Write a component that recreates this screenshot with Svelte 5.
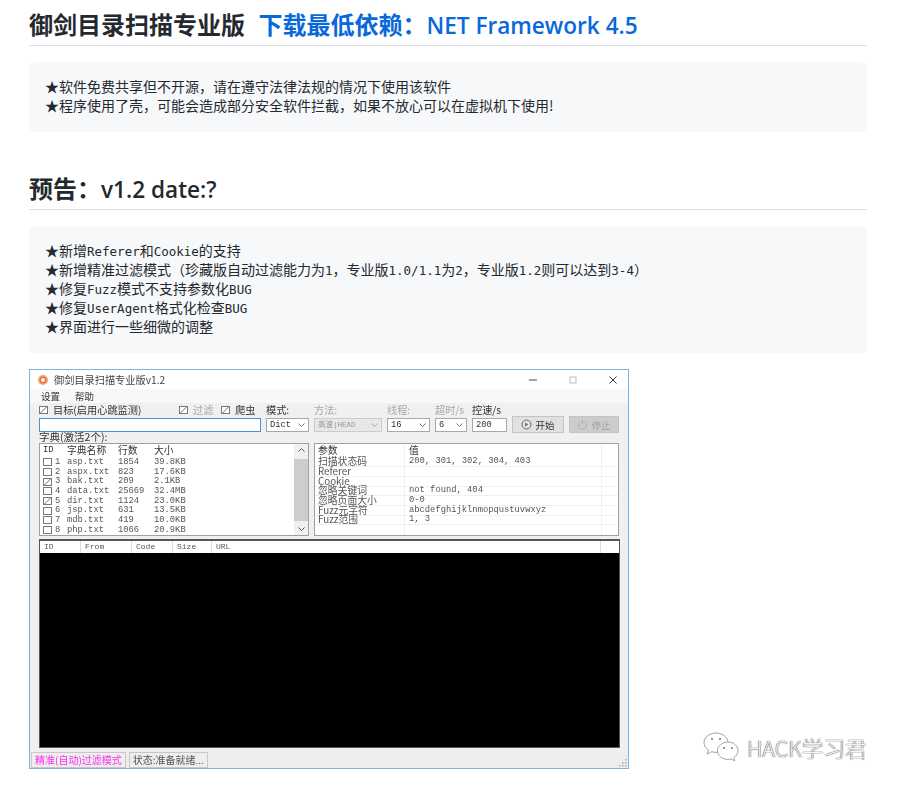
<script>
  const dicts = [
    { id: 1, name: 'asp.txt', lines: '1854', size: '39.8KB', on: false },
    { id: 2, name: 'aspx.txt', lines: '823', size: '17.6KB', on: false },
    { id: 3, name: 'bak.txt', lines: '209', size: '2.1KB', on: true },
    { id: 4, name: 'data.txt', lines: '25669', size: '32.4MB', on: false },
    { id: 5, name: 'dir.txt', lines: '1124', size: '23.0KB', on: true },
    { id: 6, name: 'jsp.txt', lines: '631', size: '13.5KB', on: false },
    { id: 7, name: 'mdb.txt', lines: '419', size: '10.0KB', on: false },
    { id: 8, name: 'php.txt', lines: '1066', size: '20.9KB', on: false }
  ];
  const params = [
    ['扫描状态码', '200, 301, 302, 304, 403'],
    ['Referer', ''],
    ['Cookie', ''],
    ['忽略关键词', 'not found, 404'],
    ['忽略页面大小', '0-0'],
    ['Fuzz元字符', 'abcdefghijklnmopqustuvwxyz'],
    ['Fuzz范围', '1, 3']
  ];
</script>

<main>
  <h2>御剑目录扫描专业版 <span class="link">下载最低依赖：<span class="en">NET Framework 4.5</span></span></h2>
  <pre class="first">★软件免费共享但不开源，请在遵守法律法规的情况下使用该软件
★程序使用了壳，可能会造成部分安全软件拦截，如果不放心可以在虚拟机下使用!</pre>

  <h2 class="next">预告：<span class="en">v1.2 date:?</span></h2>
  <pre>★新增<span class="m">Referer</span>和<span class="m">Cookie</span>的支持
★新增精准过滤模式（珍藏版自动过滤能力为<span class="m">1</span>，专业版<span class="m">1.0/1.1</span>为<span class="m">2</span>，专业版<span class="m">1.2</span>则可以达到<span class="m">3-4</span>）
★修复<span class="m">Fuzz</span>模式不支持参数化<span class="m">BUG</span>
★修复<span class="m">UserAgent</span>格式化检查<span class="m">BUG</span>
★界面进行一些细微的调整</pre>

  <div class="shot">
    <div class="window">
      <div class="titlebar">
        <svg class="appicon" width="12" height="12" viewBox="0 0 12 12">
          <circle cx="6" cy="6" r="5" fill="#f4b04a" />
          <circle cx="6" cy="6" r="3.4" fill="#e9695f" />
          <circle cx="6" cy="6" r="2" fill="#fff" />
        </svg>
        <span class="title">御剑目录扫描专业版v1.2</span>
        <div class="winbtns">
          <svg width="10" height="10" viewBox="0 0 10 10"><path d="M1 5h8" stroke="#444" /></svg>
          <svg width="10" height="10" viewBox="0 0 10 10"><rect x="2" y="2" width="6" height="6" fill="none" stroke="#bbb" /></svg>
          <svg width="10" height="10" viewBox="0 0 10 10"><path d="M1.500 1.500l7 7M8.500 1.500l-7 7" stroke="#333" /></svg>
        </div>
      </div>
      <div class="menubar"><span>设置</span><span>帮助</span></div>
      <div class="body">
        <div class="controls">
          <div class="checks">
            <label class="target"><i class="box on"></i>目标(启用心跳监测)</label>
            <label class="off filter"><i class="box on"></i>过滤</label>
            <label class="spider"><i class="box on"></i>爬虫</label>
          </div>
          <span>模式:</span>
          <span class="faded">方法:</span>
          <span class="faded">线程:</span>
          <span class="faded">超时/s</span>
          <span>控速/s</span>
          <span></span>
          <span></span>

          <div class="field focus"></div>
          <div class="field select"><b>Dict</b><svg class="chev" width="7" height="4" viewBox="0 0 7 4"><path d="M.5.5l3 3 3-3" fill="none" stroke="#777" /></svg></div>
          <div class="field select disabled"><b>高速|HEAD</b><svg class="chev" width="7" height="4" viewBox="0 0 7 4"><path d="M.5.5l3 3 3-3" fill="none" stroke="#aaa" /></svg></div>
          <div class="field select"><b>16</b><svg class="chev" width="7" height="4" viewBox="0 0 7 4"><path d="M.5.5l3 3 3-3" fill="none" stroke="#777" /></svg></div>
          <div class="field select"><b>6</b><svg class="chev" width="7" height="4" viewBox="0 0 7 4"><path d="M.5.5l3 3 3-3" fill="none" stroke="#777" /></svg></div>
          <div class="field"><b>200</b></div>
          <div class="btn">
            <svg width="11" height="11" viewBox="0 0 11 11"><circle cx="5.500" cy="5.500" r="4.500" fill="none" stroke="#666" /><path d="M4.200 3.500l3 2-3 2z" fill="#666" /></svg>
            开始
          </div>
          <div class="btn stop">
            <svg width="11" height="11" viewBox="0 0 11 11"><path d="M3.500 2.500a4 4 0 1 0 4 0M5.500 1v4" fill="none" stroke="#aaa" /></svg>
            停止
          </div>
        </div>

        <div class="dictlabel">字典(激活2个):</div>

        <div class="panes">
          <div class="pane left">
            <div class="listwrap">
              <div class="dictrow head">
                <span class="c-id">ID</span><span class="c-name zh">字典名称</span><span class="c-lines zh">行数</span><span class="zh">大小</span>
              </div>
              {#each dicts as d (d.id)}
                <div class="dictrow">
                  <span class="c-id"><i class="box" class:on={d.on}></i>{d.id}</span><span class="c-name">{d.name}</span><span class="c-lines">{d.lines}</span><span>{d.size}</span>
                </div>
              {/each}
            </div>
            <div class="scroll">
              <svg width="7" height="4" viewBox="0 0 7 4"><path d="M.5 3.500l3-3 3 3" fill="none" stroke="#555" /></svg>
              <div class="thumb"></div>
              <svg width="7" height="4" viewBox="0 0 7 4"><path d="M.5.500l3 3 3-3" fill="none" stroke="#555" /></svg>
            </div>
          </div>

          <div class="pane right">
            <div class="paramrow head"><span class="zh">参数</span><span class="zh">值</span></div>
            {#each params as p (p[0])}
              <div class="paramrow line"><span class="zh">{p[0]}</span><span>{p[1]}</span></div>
            {/each}
          </div>
        </div>

        <div class="log">
          <div class="loghead">
            <span style="width:41px">ID</span>
            <span style="width:51px">From</span>
            <span style="width:41px">Code</span>
            <span style="width:39px">Size</span>
            <span style="width:389px">URL</span>
          </div>
          <div class="logbody"></div>
        </div>
      </div>
      <div class="statusbar">
        <span class="mode">精准(自动)过滤模式</span>
        <span class="state">状态:准备就绪...</span>
        <svg class="grip" width="9" height="9" viewBox="0 0 9 9" fill="#aaa">
          <rect x="6" y="0" width="1.500" height="1.500" /><rect x="3" y="3" width="1.500" height="1.500" /><rect x="6" y="3" width="1.500" height="1.500" /><rect x="0" y="6" width="1.500" height="1.500" /><rect x="3" y="6" width="1.500" height="1.500" /><rect x="6" y="6" width="1.500" height="1.500" />
        </svg>
      </div>
    </div>
  </div>

  <div class="watermark">
    <svg width="37" height="32" viewBox="0 0 37 32" fill="#fff" stroke="#8a8a8a" stroke-width=".8">
      <path d="M13 1C6.400 1 1 5.300 1 10.600c0 3 1.700 5.700 4.400 7.500L4.300 22l4.400-2.300c1.400.4 2.900.7 4.300.7 1 0 2-.1 3-.3C20 15 24 12 25 10.600 25 5.300 19.600 1 13 1z" />
      <path d="M25 10c-5.800 0-10.500 3.900-10.500 8.700S19.200 27.400 25 27.400c1.100 0 2.200-.2 3.300-.5l3.500 2-.9-3.300c2.400-1.600 4.100-4 4.100-6.900C35 13.900 30.800 10 25 10z" />
      <circle cx="9" cy="7" r="1" fill="#777" stroke="none" />
      <circle cx="17" cy="7" r="1" fill="#777" stroke="none" />
      <circle cx="21" cy="16" r="1" fill="#777" stroke="none" />
      <circle cx="29" cy="16" r="1" fill="#777" stroke="none" />
    </svg>
    <span>HACK学习君</span>
  </div>
</main>

<style>
  :global(body) {
    margin: 0;
    background: #fff;
  }

  main {
    position: relative;
    width: 838px;
    height: 788px;
    padding: 0 0 0 29px;
    overflow: hidden;
    color: #24292f;
    font-family: "Noto Sans CJK SC", sans-serif;
  }

  h2 {
    margin: 0;
    height: 30px;
    padding: 9px 0 6px;
    font-size: 24px;
    line-height: 30px;
    font-weight: 700;
    border-bottom: 1px solid #d8dee4;
  }
  h2.next {
    margin-top: 32px;
  }
  .link {
    margin-left: 8px;
    color: #0969da;
  }
  .en {
    font-family: "Open Sans", sans-serif;
    font-size: 22.6px;
    font-weight: 600;
    line-height: 0;
  }

  pre {
    margin: 16px 0;
    padding: 15px 16px 17px;
    background: #f6f8fa;
    border-radius: 6px;
    font-family: "Noto Sans CJK SC", sans-serif;
    font-size: 14px;
    line-height: 19px;
    color: #24292f;
  }
  pre.first {
    margin-bottom: 0;
    height: 38px;
  }
  .m {
    font-family: "DejaVu Sans Mono", monospace;
    font-size: 12.5px;
    line-height: 0;
  }

  .shot {
    width: 600px;
    height: 400px;
    filter: blur(0.6px);
  }
  .window {
    box-sizing: border-box;
    display: flex;
    flex-direction: column;
    width: 600px;
    height: 400px;
    border: 1px solid #76b6ea;
    background: #f0f0f0;
    color: #333;
    font-family: "Liberation Mono", "Noto Sans CJK SC", monospace;
    font-size: 8.8px;
    line-height: 10px;
  }

  .titlebar {
    display: flex;
    align-items: center;
    height: 19px;
    padding-left: 7px;
    background: #fff;
  }
  .title {
    margin-left: 5px;
    font-family: "Noto Sans CJK SC", sans-serif;
    font-size: 10.2px;
    color: #444;
  }
  .winbtns {
    display: flex;
    gap: 30px;
    margin-left: auto;
    margin-right: 10px;
  }
  .menubar {
    display: flex;
    gap: 15px;
    height: 14px;
    align-items: center;
    padding-left: 11px;
    background: #f8f8f8;
    font-family: "Noto Sans CJK SC", sans-serif;
    font-size: 9.500px;
  }

  .body {
    flex: 1;
    display: flex;
    flex-direction: column;
    padding: 0 8px 0 9px;
    min-height: 0;
  }

  .controls {
    display: grid;
    grid-template-columns: 222px 43px 68px 43px 32px 35px 52px 50px;
    grid-template-rows: 13px 17px;
    column-gap: 5px;
    align-items: center;
    font-size: 10.2px;
    font-family: "Noto Sans CJK SC", sans-serif;
  }
  .checks {
    display: flex;
    align-items: center;
    padding-top: 1px;
  }
  .checks label {
    display: flex;
    align-items: center;
    gap: 5px;
    white-space: nowrap;
  }
  .target {
    width: 140px;
  }
  .filter {
    width: 42px;
  }
  .off,
  .faded {
    color: #a8a8a8;
  }
  i.box {
    display: inline-block;
    box-sizing: border-box;
    width: 9px;
    height: 8px;
    border: 1px solid #777;
    background: #fff;
    flex: none;
  }
  i.box.on {
    background: linear-gradient(135deg, #fff 40%, #888 50%, #fff 60%);
  }

  .field {
    box-sizing: border-box;
    display: flex;
    align-items: center;
    justify-content: space-between;
    height: 14px;
    padding: 0 3px;
    background: #fff;
    border: 1px solid #a8a8a8;
    font-family: "Liberation Mono", "Noto Sans CJK SC", monospace;
    font-size: 8.8px;
  }
  .field b {
    font-weight: 400;
    white-space: nowrap;
    overflow: hidden;
  }
  .field.focus {
    border-color: #4a90d0;
  }
  .field.disabled {
    background: #e8e8e8;
    border-color: #ccc;
    color: #999;
    font-size: 7.500px;
  }
  .chev {
    flex: none;
  }
  .btn {
    box-sizing: border-box;
    display: flex;
    align-items: center;
    justify-content: center;
    gap: 3px;
    height: 17px;
    background: #e1e1e1;
    border: 1px solid #c4c4c4;
    font-size: 9.5px;
  }
  .btn.stop {
    background: #cccccc;
    border-color: #c4c4c4;
    color: #a0a0a0;
  }

  .dictlabel {
    margin-top: -1px;
    height: 10px;
    font-family: "Noto Sans CJK SC", sans-serif;
    font-size: 10.5px;
    line-height: 10px;
  }

  .panes {
    display: flex;
    gap: 5px;
    margin-top: 1px;
    height: 93px;
  }
  .pane {
    box-sizing: border-box;
    height: 93px;
    background: #fff;
    border: 1px solid #a0a0a0;
  }
  .pane.left {
    display: flex;
    width: 270px;
  }
  .pane.right {
    width: 305px;
    background:
      linear-gradient(#f0f0f0, #f0f0f0) 89px 0 / 1px 100% no-repeat,
      linear-gradient(#f0f0f0, #f0f0f0) 286px 0 / 1px 100% no-repeat,
      #fff;
  }
  .listwrap {
    flex: 1;
  }
  .dictrow {
    display: flex;
    height: 9.700px;
    padding-left: 3px;
    align-items: center;
    color: #555;
    white-space: nowrap;
    line-height: 9px;
  }
  .dictrow.head {
    height: 12px;
    margin-bottom: 1.500px;
    color: #333;
  }
  .c-id {
    display: flex;
    align-items: center;
    gap: 3px;
    width: 24px;
    flex: none;
  }
  .c-name {
    width: 51px;
    flex: none;
  }
  .c-lines {
    width: 36px;
    flex: none;
  }
  .zh {
    font-family: "Noto Sans CJK SC", sans-serif;
    font-size: 9.800px;
  }
  .scroll {
    display: flex;
    flex-direction: column;
    align-items: center;
    justify-content: space-between;
    width: 14px;
    padding: 4px 0;
    background: #f0f0f0;
  }
  .thumb {
    width: 100%;
    height: 62px;
    background: #cdcdcd;
  }

  .paramrow {
    display: flex;
    height: 9.700px;
    align-items: center;
    white-space: nowrap;
    color: #555;
    line-height: 9px;
  }
  .paramrow.head {
    height: 12px;
    margin-bottom: 1.500px;
    color: #333;
  }
  .paramrow span:first-child {
    width: 94px;
    padding-left: 3px;
    flex: none;
    box-sizing: border-box;
  }
  .paramrow.line {
    border-bottom: 1px solid #f0f0f0;
    box-sizing: border-box;
  }

  .log {
    box-sizing: border-box;
    display: flex;
    flex-direction: column;
    height: 209px;
    margin-top: 3px;
    border: 1px solid #555;
    border-top-width: 2px;
  }
  .loghead {
    display: flex;
    height: 12px;
    align-items: center;
    background: #fff;
    color: #555;
    font-size: 8px;
  }
  .loghead span {
    box-sizing: border-box;
    padding-left: 4px;
    border-right: 1px solid #ddd;
    line-height: 12px;
  }
  .logbody {
    flex: 1;
    background: #000;
  }

  .statusbar {
    position: relative;
    display: flex;
    align-items: center;
    gap: 3px;
    height: 16px;
    padding-left: 1px;
    font-family: "Noto Sans CJK SC", sans-serif;
    font-size: 10px;
    background: #eeeeee;
  }
  .statusbar span {
    display: flex;
    align-items: center;
    height: 14px;
    padding: 0 3px;
    border: 1px solid #c8c8c8;
    white-space: nowrap;
  }
  .mode {
    color: #ff2df0;
  }
  .state {
    color: #555;
  }
  .grip {
    position: absolute;
    right: 0;
    bottom: 0;
  }

  .watermark {
    position: absolute;
    left: 703px;
    top: 732px;
    display: flex;
    align-items: center;
    gap: 7px;
  }
  .watermark span {
    font-family: "Noto Sans CJK SC", sans-serif;
    font-weight: 300;
    font-size: 21.600px;
    line-height: 32px;
    color: #f4f4f4;
    text-shadow: 0 0 1px #444, 0 0 1px #444;
  }
</style>
